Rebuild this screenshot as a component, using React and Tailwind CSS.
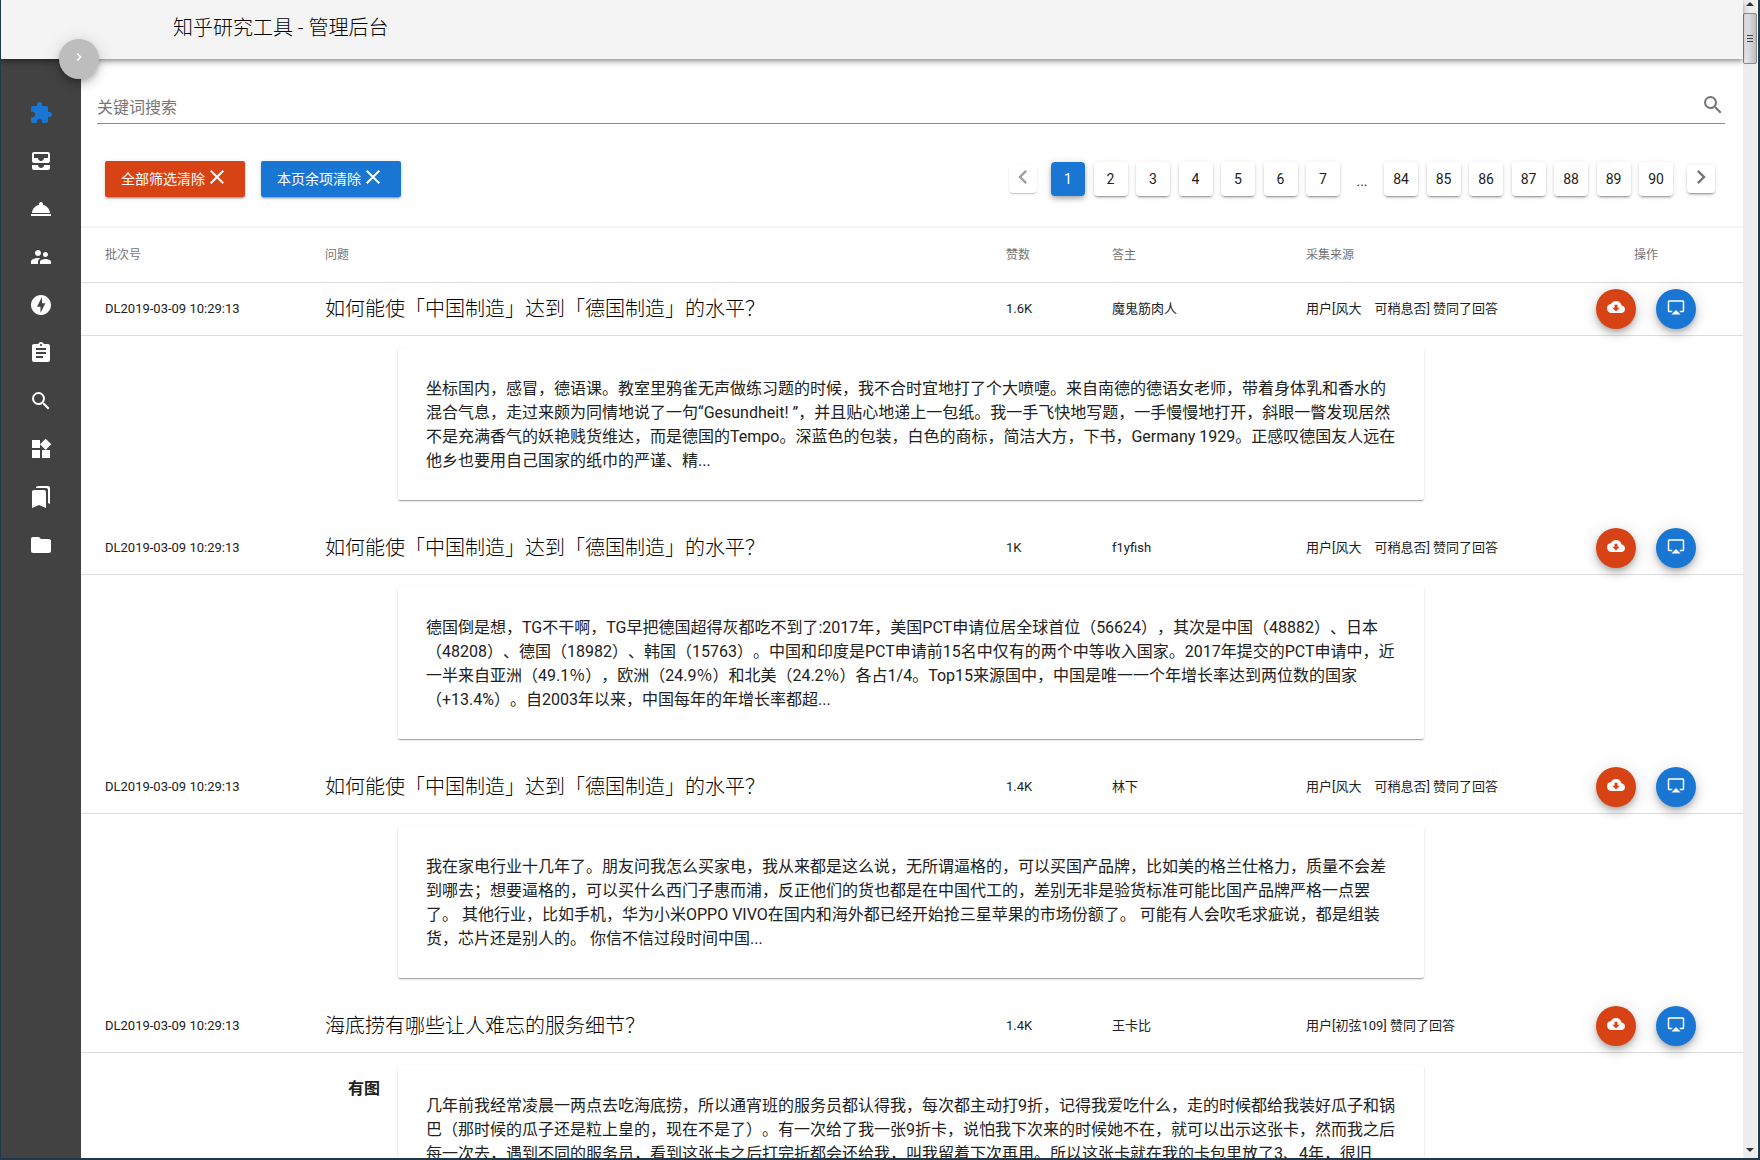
import React from "react";
import {
  MdAirplay,
  MdAllInbox,
  MdAssignment,
  MdBookmarks,
  MdChevronLeft,
  MdChevronRight,
  MdClose,
  MdCloudDownload,
  MdExtension,
  MdFolder,
  MdOfflineBolt,
  MdRoomService,
  MdSearch,
  MdSupervisorAccount,
  MdWidgets,
} from "react-icons/md";

const navItems = [
  { label: "扩展", Icon: MdExtension, active: true },
  { label: "收件箱", Icon: MdAllInbox },
  { label: "服务", Icon: MdRoomService },
  { label: "用户", Icon: MdSupervisorAccount },
  { label: "任务", Icon: MdOfflineBolt },
  { label: "清单", Icon: MdAssignment },
  { label: "搜索", Icon: MdSearch },
  { label: "组件", Icon: MdWidgets },
  { label: "书签", Icon: MdBookmarks },
  { label: "文件夹", Icon: MdFolder },
];

const rows = [
  {
    batch: "DL2019-03-09 10:29:13",
    question: "如何能使「中国制造」达到「德国制造」的水平？",
    votes: "1.6K",
    author: "魔鬼筋肉人",
    source: "用户[风大　可稍息否] 赞同了回答",
    text: "坐标国内，感冒，德语课。教室里鸦雀无声做练习题的时候，我不合时宜地打了个大喷嚏。来自南德的德语女老师，带着身体乳和香水的混合气息，走过来颇为同情地说了一句“Gesundheit! ”，并且贴心地递上一包纸。我一手飞快地写题，一手慢慢地打开，斜眼一瞥发现居然不是充满香气的妖艳贱货维达，而是德国的Tempo。深蓝色的包装，白色的商标，简洁大方，下书，Germany 1929。正感叹德国友人远在他乡也要用自己国家的纸巾的严谨、精...",
  },
  {
    batch: "DL2019-03-09 10:29:13",
    question: "如何能使「中国制造」达到「德国制造」的水平？",
    votes: "1K",
    author: "f1yfish",
    source: "用户[风大　可稍息否] 赞同了回答",
    text: "德国倒是想，TG不干啊，TG早把德国超得灰都吃不到了:2017年，美国PCT申请位居全球首位（56624），其次是中国（48882）、日本（48208）、德国（18982）、韩国（15763）。中国和印度是PCT申请前15名中仅有的两个中等收入国家。2017年提交的PCT申请中，近一半来自亚洲（49.1％），欧洲（24.9％）和北美（24.2％）各占1/4。Top15来源国中，中国是唯一一个年增长率达到两位数的国家（+13.4%）。自2003年以来，中国每年的年增长率都超...",
  },
  {
    batch: "DL2019-03-09 10:29:13",
    question: "如何能使「中国制造」达到「德国制造」的水平？",
    votes: "1.4K",
    author: "林下",
    source: "用户[风大　可稍息否] 赞同了回答",
    text: "我在家电行业十几年了。朋友问我怎么买家电，我从来都是这么说，无所谓逼格的，可以买国产品牌，比如美的格兰仕格力，质量不会差到哪去；想要逼格的，可以买什么西门子惠而浦，反正他们的货也都是在中国代工的，差别无非是验货标准可能比国产品牌严格一点罢了。 其他行业，比如手机，华为小米OPPO VIVO在国内和海外都已经开始抢三星苹果的市场份额了。 可能有人会吹毛求疵说，都是组装货，芯片还是别人的。 你信不信过段时间中国...",
  },
  {
    batch: "DL2019-03-09 10:29:13",
    question: "海底捞有哪些让人难忘的服务细节？",
    votes: "1.4K",
    author: "王卡比",
    source: "用户[初弦109] 赞同了回答",
    tag: "有图",
    text: "几年前我经常凌晨一两点去吃海底捞，所以通宵班的服务员都认得我，每次都主动打9折，记得我爱吃什么，走的时候都给我装好瓜子和锅巴（那时候的瓜子还是粒上皇的，现在不是了）。有一次给了我一张9折卡，说怕我下次来的时候她不在，就可以出示这张卡，然而我之后每一次去，遇到不同的服务员，看到这张卡之后打完折都会还给我，叫我留着下次再用。所以这张卡就在我的卡包里放了3、4年，很旧",
  },
];

const raised =
  "shadow-[0_3px_1px_-2px_rgba(0,0,0,0.2),0_2px_2px_0_rgba(0,0,0,0.14),0_1px_5px_0_rgba(0,0,0,0.12)]";
const floating =
  "shadow-[0_3px_5px_-1px_rgba(0,0,0,0.2),0_6px_10px_0_rgba(0,0,0,0.14),0_1px_18px_0_rgba(0,0,0,0.12)]";

function Header() {
  return (
    <header className="relative z-10 flex h-[59px] shrink-0 items-center bg-[#f4f4f4] pb-1 pl-43 shadow-[0_2px_4px_-1px_rgba(0,0,0,0.3),0_4px_5px_0_rgba(0,0,0,0.14),0_1px_10px_0_rgba(0,0,0,0.12)]">
      <h1 className="text-[20px] leading-8 font-light text-black">知乎研究工具 - 管理后台</h1>
      <button
        type="button"
        aria-label="展开菜单"
        className={`absolute -bottom-5 left-[58px] flex size-10 items-center justify-center rounded-full bg-[#bdbdbd] text-white ${floating}`}
      >
        <MdChevronRight className="mb-1 size-4" />
      </button>
    </header>
  );
}

function Sidebar() {
  return (
    <nav className="w-20 shrink-0 bg-[#424242] pt-[30px]" aria-label="主导航">
      {navItems.map(({ label, Icon, active }) => (
        <a
          key={label}
          href="#"
          aria-label={label}
          className={`flex h-12 items-center justify-center ${active ? "text-[#1976d2]" : "text-white"}`}
        >
          <Icon className="size-6" />
        </a>
      ))}
    </nav>
  );
}

function SearchBar() {
  return (
    <div className="mr-[18px] ml-4 flex h-[33px] items-center border-b border-[#8c8c8c]">
      <input
        type="text"
        aria-label="关键词搜索"
        placeholder="关键词搜索"
        className="h-8 min-w-0 flex-1 bg-transparent text-[16px] outline-none placeholder:text-[#757575]"
      />
      <button type="button" aria-label="搜索" className="mb-1 text-[#757575]">
        <MdSearch className="size-6" />
      </button>
    </div>
  );
}

function ClearButton({ children, color }) {
  return (
    <button
      type="button"
      className={`flex h-9 items-center rounded-[2px] px-4 text-[14px] text-white ${color} ${raised}`}
    >
      {children}
      <MdClose className="mb-1 size-6" />
    </button>
  );
}

function PageGroup({ pages, current }) {
  return (
    <ol className="flex w-[289px] justify-between">
      {pages.map((n) => (
        <li key={n}>
          <button
            type="button"
            aria-current={n === current ? "page" : undefined}
            className={`flex size-[34px] items-center justify-center rounded-[4px] text-[14px] ${
              n === current
                ? "bg-[#1976d2] text-white shadow-[0_2px_4px_-1px_rgba(0,0,0,0.2),0_4px_5px_0_rgba(0,0,0,0.14),0_1px_10px_0_rgba(0,0,0,0.12)]"
                : "bg-white shadow-[0_3px_1px_-2px_rgba(0,0,0,0.2),0_2px_2px_0_rgba(0,0,0,0.14),0_1px_5px_0_rgba(0,0,0,0.12)]"
            }`}
          >
            {n}
          </button>
        </li>
      ))}
    </ol>
  );
}

function Pagination() {
  return (
    <nav className="mr-7 ml-auto flex items-center" aria-label="分页">
      <button
        type="button"
        disabled
        aria-label="上一页"
        className="mr-3.5 flex size-7 items-center justify-center rounded-[4px] bg-white text-[#9e9e9e] shadow-[0_2px_1px_-1px_rgba(0,0,0,0.1),0_1px_1px_0_rgba(0,0,0,0.08),0_1px_3px_0_rgba(0,0,0,0.1)]"
      >
        <MdChevronLeft className="mb-1 size-7" />
      </button>
      <PageGroup pages={[1, 2, 3, 4, 5, 6, 7]} current={1} />
      <span className="w-11 pt-1 text-center text-[14px]">...</span>
      <PageGroup pages={[84, 85, 86, 87, 88, 89, 90]} />
      <button
        type="button"
        aria-label="下一页"
        className={`ml-3.5 flex size-7 items-center justify-center rounded-[4px] bg-white text-[#757575] ${raised}`}
      >
        <MdChevronRight className="mb-1 size-7" />
      </button>
    </nav>
  );
}

function RoundButton({ label, color, Icon }) {
  return (
    <button
      type="button"
      aria-label={label}
      className={`flex size-10 items-center justify-center rounded-full text-white ${color} ${floating}`}
    >
      <Icon className="mb-1 size-[18px]" />
    </button>
  );
}

function AnswerRows({ row }) {
  const cell = "h-[53px] border-b border-[#dcdcdc] pl-6 text-[13px] whitespace-nowrap";
  return (
    <>
      <tr>
        <td className={cell}>{row.batch}</td>
        <td className="h-[53px] border-b border-[#dcdcdc] pl-6 text-[20px] font-light whitespace-nowrap text-black">
          {row.question}
        </td>
        <td className={cell}>{row.votes}</td>
        <td className={cell}>{row.author}</td>
        <td className={cell}>{row.source}</td>
        <td className="h-[53px] border-b border-[#dcdcdc]">
          <div className="flex justify-center gap-5">
            <RoundButton label="下载" color="bg-[#d84315]" Icon={MdCloudDownload} />
            <RoundButton label="查看" color="bg-[#1976d2]" Icon={MdAirplay} />
          </div>
        </td>
      </tr>
      <tr>
        <td colSpan={6} className="p-0">
          <div className="grid grid-cols-[317fr_1026fr_319fr] pt-3 pb-[22px]">
            <div className="pt-3 pr-[18px] text-right text-[16px] leading-6 font-bold">
              {row.tag}
            </div>
            <p className="rounded-[2px] bg-white px-7 pt-[29px] pb-[27px] text-[16px] leading-6 [text-spacing-trim:space-all] shadow-[0_2px_1px_-1px_rgba(0,0,0,0.2),0_1px_1px_0_rgba(0,0,0,0.14),0_1px_3px_0_rgba(0,0,0,0.12)]">
              {row.text}
            </p>
          </div>
        </td>
      </tr>
    </>
  );
}

function AnswerTable() {
  const head =
    "h-[57px] border-t-2 border-b border-t-[#f4f4f4] border-b-[#dcdcdc] text-[12px] font-normal text-[#757575]";
  return (
    <table className="w-full table-fixed border-separate border-spacing-0">
      <colgroup>
        <col className="w-[220px]" />
        <col />
        <col className="w-[106px]" />
        <col className="w-[194px]" />
        <col className="w-[267px]" />
        <col className="w-[194px]" />
      </colgroup>
      <thead>
        <tr>
          {["批次号", "问题", "赞数", "答主", "采集来源"].map((title) => (
            <th key={title} className={`${head} pl-6 text-left`}>
              {title}
            </th>
          ))}
          <th className={`${head} text-center`}>操作</th>
        </tr>
      </thead>
      <tbody>
        {rows.map((row, i) => (
          <AnswerRows key={i} row={row} />
        ))}
      </tbody>
    </table>
  );
}

function ScrollTrack() {
  return (
    <div
      aria-hidden="true"
      className="flex w-[15px] shrink-0 flex-col items-center border-r border-white bg-[#ededed]"
    >
      <svg className="mt-0.5 h-1 w-2" viewBox="0 0 8 4">
        <path d="M4 0 8 4H0Z" fill="#333" />
      </svg>
      <div className="mt-[7px] flex h-[51px] w-full flex-col items-center justify-center gap-0.5 rounded-[2px] border border-[#8a8a8f] bg-linear-to-r from-[#f3f3f3] to-[#bdbdc2]">
        <i className="h-px w-1.5 bg-[#444]" />
        <i className="h-px w-1.5 bg-[#444]" />
        <i className="h-px w-1.5 bg-[#444]" />
      </div>
      <svg className="mt-auto mb-1.5 h-1 w-2" viewBox="0 0 8 4">
        <path d="M0 0H8L4 4Z" fill="#333" />
      </svg>
    </div>
  );
}

export default function App() {
  return (
    <div className="flex h-screen overflow-hidden border-r-2 border-b-2 border-l border-[#20384a] bg-white font-[Roboto,'Noto_Sans_CJK_SC',sans-serif] text-[#212121]">
      <div className="flex min-w-0 flex-1 flex-col">
        <Header />
        <div className="flex min-h-0 flex-1">
          <Sidebar />
          <main className="min-w-0 flex-1 overflow-hidden pt-8">
            <SearchBar />
            <div className="flex h-[102px] items-center gap-4 pt-2 pl-6">
              <ClearButton color="bg-[#d84315]">全部筛选清除</ClearButton>
              <ClearButton color="bg-[#1976d2]">本页余项清除</ClearButton>
              <Pagination />
            </div>
            <AnswerTable />
          </main>
        </div>
      </div>
      <ScrollTrack />
    </div>
  );
}
